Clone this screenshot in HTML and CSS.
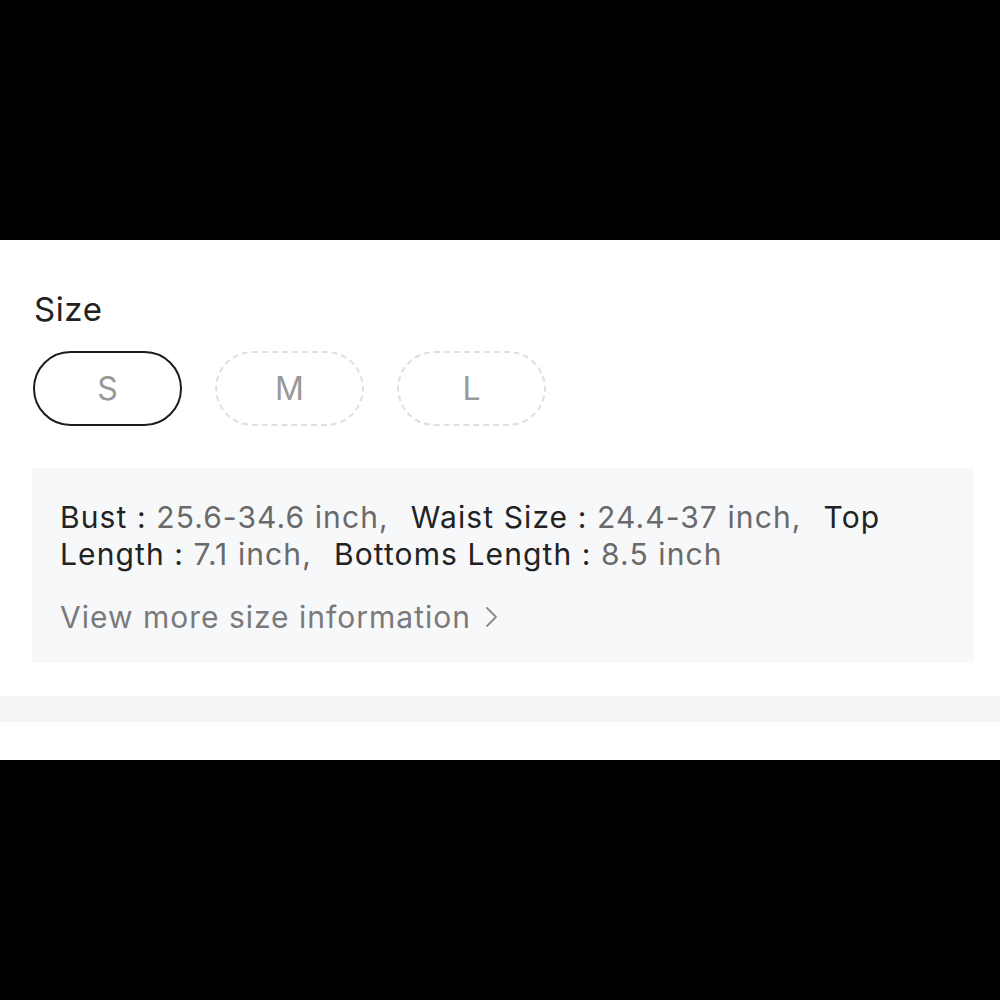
FILE: index.html
```html
<!DOCTYPE html>
<html lang="en">
<head>
    <meta charset="UTF-8">
    <meta name="viewport" content="width=device-width, initial-scale=1.0">
    <title>Size</title>
    <link rel="stylesheet" href="styles.css">
</head>
<body>
    <div class="bar"></div>

    <main class="sheet">
        <section class="size-panel">
            <h2 class="size-title">Size</h2>
            <div class="size-options">
                <button class="size-pill selected">S</button>
                <button class="size-pill disabled">M</button>
                <button class="size-pill disabled">L</button>
            </div>

            <div class="size-info">
                <p class="measures">
                    <span class="label">Bust :</span> <span class="value">25.6-34.6 inch,</span>&nbsp;
                    <span class="label">Waist Size :</span> <span class="value">24.4-37 inch,</span>&nbsp;
                    <span class="label">Top</span> <span class="label">Length :</span> <span class="value">7.1 inch,</span>&nbsp;
                    <span class="label">Bottoms Length :</span> <span class="value">8.5 inch</span>
                </p>
                <a href="#size-guide" class="more-link">
                    View more size information
                    <svg class="chevron" width="14" height="24" viewBox="0 0 14 24">
                        <polyline points="3,3 12,12 3,21" fill="none" stroke="#8a8a8a" stroke-width="1.8" stroke-linecap="round" stroke-linejoin="round"/>
                    </svg>
                </a>
            </div>
        </section>

        <div class="divider"></div>
    </main>

    <div class="bar"></div>
</body>
</html>
```

FILE: styles.css
```css
body {
    margin: 0;
    padding: 0;
    background-color: #000;
    font-family: Inter, 'Noto Sans', sans-serif;
}
.bar {
    height: 240px;
    background-color: #000;
}
.sheet {
    background-color: #fff;
    height: 520px;
    overflow: hidden;
}
.size-panel {
    padding: 49px 26px 0 32px;
}
.size-title {
    margin: 0 0 22px 2px;
    font-size: 33px;
    font-weight: 400;
    line-height: 40px;
    letter-spacing: 0.6px;
    color: #222;
}
.size-options {
    display: flex;
    gap: 33px;
    margin-left: 1px;
}
.size-pill {
    width: 149px;
    height: 75px;
    border-radius: 38px;
    background: #fff;
    font-family: inherit;
    font-size: 32px;
    color: #999;
    padding: 0;
}
.size-pill.selected {
    border: 2px solid #1c1c1c;
}
.size-pill.disabled {
    border: 2px dashed #e0e0e0;
    color: #9a9a9a;
}
.size-info {
    margin-top: 42px;
    background-color: #f7f8fa;
    padding: 31px 28px 28px 28px;
}
.measures {
    margin: 0;
    font-size: 30px;
    line-height: 37px;
    letter-spacing: 1.1px;
    color: #222;
}
.measures .value {
    color: #6a6a6a;
    margin-right: 3px;
}
.more-link {
    display: flex;
    align-items: center;
    gap: 13px;
    margin-top: 26px;
    font-size: 30px;
    line-height: 36px;
    letter-spacing: 1px;
    color: #7a7a7a;
    text-decoration: none;
}
.divider {
    height: 26px;
    margin-top: 33px;
    background-color: #f4f4f4;
}
```
